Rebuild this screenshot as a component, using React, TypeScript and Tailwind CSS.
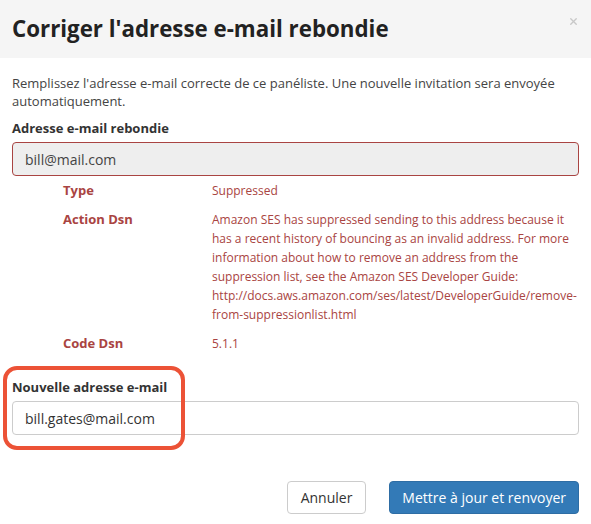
import { X } from 'lucide-react';

const DETAILS = [
  { label: 'Type', value: 'Suppressed' },
  {
    label: 'Action Dsn',
    value:
      'Amazon SES has suppressed sending to this address because it has a recent history of bouncing as an invalid address. For more information about how to remove an address from the suppression list, see the Amazon SES Developer Guide: http://docs.aws.amazon.com/ses/latest/DeveloperGuide/remove-from-suppressionlist.html',
  },
  { label: 'Code Dsn', value: '5.1.1' },
];

export default function App() {
  return (
    <div className="w-[591px] h-[524px] bg-white font-['Open_Sans',sans-serif] text-[#333] relative overflow-hidden">
      <div className="h-[58px] bg-[#f5f5f5] flex items-center justify-between pl-3 pr-2">
        <h2 className="text-[22.3px] font-bold text-[#222] leading-none">Corriger l'adresse e-mail rebondie</h2>
        <X size={11} strokeWidth={3} className="text-[#c8c8c8] mb-4 mr-1" />
      </div>

      <div className="px-3 pt-[16px]">
        <p className="text-[13px] leading-[18px] text-[#444]">
          Remplissez l'adresse e-mail correcte de ce panéliste. Une nouvelle invitation sera envoyée automatiquement.
        </p>

        <label className="block mt-[9px] text-[13px] font-bold leading-[18px] text-[#333]">Adresse e-mail rebondie</label>
        <div className="mt-[5px] h-[34px] rounded border border-[#a94442] bg-[#eeeeee] flex items-center px-3 text-[14px] text-[#444]">
          bill@mail.com
        </div>

        <div className="mt-[5px] pl-[51px] text-[#a94442] text-[12px] leading-[19px]">
          {DETAILS.map(d => (
            <div key={d.label} className="flex mb-[10px]">
              <div className="w-[149px] shrink-0 font-bold text-[13px]">{d.label}</div>
              <div className="flex-1 pr-1">{d.value}</div>
            </div>
          ))}
        </div>

        <label className="block mt-[25px] text-[13px] font-bold leading-[18px] text-[#333]">Nouvelle adresse e-mail</label>
        <div className="mt-[5px] h-[34px] rounded border border-[#ccc] bg-white flex items-center px-3 text-[14px] text-[#333]">
          bill.gates@mail.com
        </div>

        <div className="mt-[46px] flex justify-end gap-[23px]">
          <button className="h-[33px] px-[13px] rounded border border-[#ccc] bg-white text-[14px] text-[#333]">Annuler</button>
          <button className="h-[33px] px-3 rounded bg-[#337ab7] border border-[#2e6da4] text-[14px] text-white">
            Mettre à jour et renvoyer
          </button>
        </div>
      </div>

      <div className="absolute left-[3px] top-[366px] w-[182px] h-[84px] rounded-[14px] border-4 border-[#ec5236] pointer-events-none" />
    </div>
  );
}
